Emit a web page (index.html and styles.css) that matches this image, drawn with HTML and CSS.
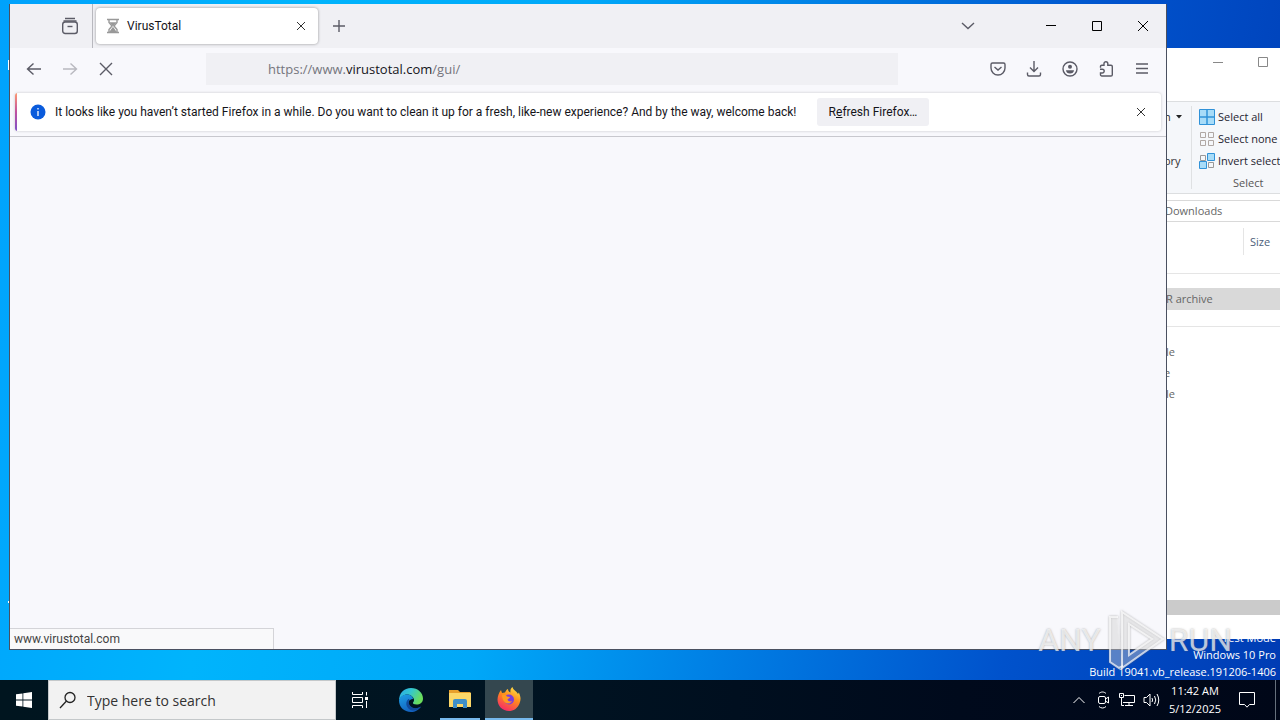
FILE: index.html
```html
<!DOCTYPE html>
<html lang="en">
<head>
<meta charset="utf-8">
<title>Desktop</title>
<link rel="stylesheet" href="styles.css">
</head>
<body>
<div class="screen">
  <main class="desktop">
    <div class="build"><span>Test Mode</span><span>Windows 10 Pro</span><span>Build 19041.vb_release.191206-1406</span></div>
    <div class="label-edge"></div>
    <div class="label-edge low"></div>

    <section class="explorer" aria-label="File Explorer">
      <div class="ex-title">
        <button aria-label="Minimize"><svg width="10" height="10" viewBox="0 0 10 10"><path d="M0 5.500h10"/></svg></button>
        <button aria-label="Maximize"><svg width="10" height="10" viewBox="0 0 10 10"><path d="M.5.5h9v9h-9z"/></svg></button>
      </div>
      <div class="ribbon">
        <div class="ribbon-open"><button>n <svg width="6" height="4" viewBox="0 0 6 4"><path d="M0 0h6L3 3.500z" fill="#222"/></svg></button><button>ory</button></div>
        <div class="ribbon-select">
          <button><svg width="16" height="16" viewBox="0 0 16 16"><path d="M.5.5h15v15H.5z" fill="#a8dcf8" stroke="#3092d8"/><path d="M8 0v16M0 8h16" stroke="#3092d8" stroke-width="1.500"/></svg>Select all</button>
          <button><svg width="16" height="16" viewBox="0 0 16 16" fill="none" stroke="#b0a8a4"><path d="M1.500 1.500h5v5h-5zM9.500 1.500h5v5h-5zM1.500 9.500h5v5h-5zM9.500 9.500h5v5h-5z"/></svg>Select none</button>
          <button><svg width="16" height="16" viewBox="0 0 16 16" fill="none"><path d="M1.500 2.500h5v5h-5zM9.500 9.500h5v5h-5z" stroke="#999"/><path d="M8.500.5h7v7h-7zM.5 8.500h7v7h-7z" fill="#a8dcf8" stroke="#3092d8"/></svg>Invert select</button>
          <span class="ribbon-name">Select</span>
        </div>
      </div>
      <div class="address">Downloads</div>
      <div class="columns"><span>Size</span></div>
      <ul class="files">
        <li class="picked">R archive</li>
        <li class="divider"></li>
        <li>le</li>
        <li class="short">e</li>
        <li>le</li>
      </ul>
      <div class="ex-scroll"></div>
    </section>

    <section class="firefox" aria-label="Firefox">
      <div class="tabs">
        <button class="view" aria-label="Firefox View"><svg width="18" height="18" viewBox="0 0 18 18"><path d="M4 1.500h10M2.500 4h13" stroke-width="1.300"/><rect x="1.700" y="5" width="14.600" height="11.500" rx="2.500"/><path d="M6.500 9.500h5"/></svg></button>
        <div class="tab">
          <svg width="14" height="16" viewBox="0 0 14 16" class="glass"><path d="M1 1.500h12M1 14.500h12M3 2v2.500L6 8l-3 3.500V14M11 2v2.500L8 8l3 3.500V14"/><path d="M5 5h4L7 7.500zM4.500 13.500L7 10l2.500 3.500z" fill="#999"/></svg>
          <span class="tab-name">VirusTotal</span>
          <button aria-label="Close tab"><svg width="10" height="10" viewBox="0 0 10 10"><path d="M1 1l8 8M9 1L1 9"/></svg></button>
        </div>
        <button class="plus" aria-label="New tab"><svg width="12" height="12" viewBox="0 0 12 12"><path d="M6 0v12M0 6h12"/></svg></button>
        <button class="list" aria-label="List all tabs"><svg width="14" height="8" viewBox="0 0 14 8"><path d="M1 1l6 5.500L13 1"/></svg></button>
        <button class="sys" aria-label="Minimize"><svg width="10" height="10" viewBox="0 0 10 10"><path d="M0 4.500h10"/></svg></button>
        <button class="sys" aria-label="Maximize"><svg width="10" height="10" viewBox="0 0 10 10"><path d="M.5.5h9v9h-9z"/></svg></button>
        <button class="sys" aria-label="Close"><svg width="10" height="10" viewBox="0 0 10 10"><path d="M0 0l10 10M10 0L0 10"/></svg></button>
      </div>
      <div class="nav">
        <button aria-label="Back"><svg width="16" height="16" viewBox="0 0 16 16"><path d="M15 8H1.500M7.500 2.500L1.500 8l6 5.500"/></svg></button>
        <button aria-label="Forward" disabled><svg width="16" height="16" viewBox="0 0 16 16"><path d="M1 8h13.500M8.500 2.500l6 5.500-6 5.500"/></svg></button>
        <button aria-label="Stop"><svg width="14" height="14" viewBox="0 0 14 14"><path d="M1 1l12 12M13 1L1 13"/></svg></button>
        <div class="url" role="textbox" contenteditable="true" spellcheck="false" aria-label="Address">https://www.<b>virustotal.com</b>/gui/</div>
        <div class="tools">
          <button aria-label="Pocket"><svg width="16" height="16" viewBox="0 0 16 16"><path d="M2.500 2h11a1.500 1.500 0 0 1 1.500 1.500V7A7 7 0 0 1 1 7V3.500A1.500 1.500 0 0 1 2.500 2zM4.500 6L8 9l3.500-3"/></svg></button>
          <button aria-label="Downloads"><svg width="16" height="16" viewBox="0 0 16 16"><path d="M8 0v10.500M4 6.500l4 4 4-4M1.500 11.500v2A1.500 1.500 0 0 0 3 15h10a1.500 1.500 0 0 0 1.500-1.500v-2"/></svg></button>
          <button aria-label="Account"><svg width="16" height="16" viewBox="0 0 16 16"><circle cx="8" cy="8" r="7"/><circle cx="8" cy="5.800" r="2" fill="#5b5b66" stroke="none"/><path d="M4 9.200h8c0 2-1.800 3.300-4 3.300s-4-1.300-4-3.300z" fill="#5b5b66" stroke="none"/></svg></button>
          <button aria-label="Extensions"><svg width="16" height="16" viewBox="0 0 16 16"><path d="M2.500 6.800V5.500A1.300 1.300 0 0 1 3.800 4.200H6V2.600a1.900 1.900 0 0 1 3.800 0v1.600H13a1.300 1.300 0 0 1 1.300 1.300v8.200A1.300 1.300 0 0 1 13 15H3.800a1.300 1.300 0 0 1-1.300-1.300V12h1.800a1.900 1.900 0 0 0 0-3.800H2"/></svg></button>
          <button aria-label="Menu"><svg width="14" height="14" viewBox="0 0 14 14"><path d="M1 2h12M1 6.500h12M1 11h12"/></svg></button>
        </div>
      </div>
      <div class="notice">
        <svg width="16" height="16" viewBox="0 0 16 16" class="info"><circle cx="8" cy="8" r="7.500" fill="#0a5bdc"/><path d="M8 7v5M8 4v1.500" stroke="#fff" stroke-width="1.300"/></svg>
        <p>It looks like you haven’t started Firefox in a while. Do you want to clean it up for a fresh, like-new experience? And by the way, welcome back!</p>
        <button class="refresh">R<u>e</u>fresh Firefox…</button>
        <button class="dismiss" aria-label="Dismiss"><svg width="10" height="10" viewBox="0 0 10 10"><path d="M1 1l8 8M9 1L1 9"/></svg></button>
      </div>
      <div class="page"><div class="status">www.virustotal.com</div></div>
    </section>

    <div class="mark"><span>ANY</span>
      <svg width="60" height="64" viewBox="0 0 60 64"><path d="M17 4l41 27-41 29zM24 16v31l23-16z"/><path d="M13 9H5v45l9 6 4-2"/></svg>
      <span>RUN</span></div>
  </main>

  <footer class="taskbar">
    <button class="start" aria-label="Start"><svg width="16" height="16" viewBox="0 0 16 16"><path fill="#fff" d="M0 2.300l6.500-.9v6.200H0zM7.300 1.200L16 0v7.600H7.300zM0 8.400h6.500v6.200L0 13.700zM7.300 8.400H16V16l-8.700-1.200z"/></svg></button>
    <label class="search"><svg width="18" height="18" viewBox="0 0 18 18"><circle cx="11" cy="6.500" r="5"/><path d="M7.500 10L1 17"/></svg><input type="text" placeholder="Type here to search" aria-label="Search"></label>
    <button class="app" aria-label="Task View"><svg width="16" height="16" viewBox="0 0 16 16" fill="none" stroke="#fff"><path d="M.5 0v2.500h10V0M.5 5.500h10v5H.5zM.5 16v-2.500h10V16M14.500 0v3.500M14.500 9v7"/><path d="M13 5h3v3h-3z" fill="#fff" stroke="none"/></svg></button>
    <button class="app edge" aria-label="Edge"><svg width="24" height="24" viewBox="0 0 24 24"><defs><linearGradient id="eg" x1="0" y1="0" x2="1" y2=".4"><stop offset="0" stop-color="#29a9e8"/><stop offset=".5" stop-color="#34c7cf"/><stop offset="1" stop-color="#6ade5b"/></linearGradient><linearGradient id="eb" x1="0" y1="0" x2=".5" y2="1"><stop offset="0" stop-color="#1da0e6"/><stop offset="1" stop-color="#1361be"/></linearGradient></defs><path d="M0 13C0 5 5 0 12 0s12 5 12 10.500c0 4-3 6-6.500 6-2.500 0-4-1-3.500-2 1-1 1-2 1-3C14 8 11 6.500 8 6.500S1 9 0 13z" fill="url(#eg)"/><path d="M0 12.500C1 8 5 6.500 8 6.500c4 0 6 2.500 6 4.500-5 .5-5 4-3.500 6.500 2 3.200 6.500 4.500 11.500 1C20 22 16 24 12 24 5 24 0 19 0 12.500z" fill="url(#eb)"/><path d="M9.500 11C5 15 8 21 13 22.500c4 .5 7-1.500 9-4-5 3-9.500 1.500-11.500-1.500-1.200-2-1-4.500 0-6z" fill="#114a9b"/></svg></button>
    <button class="app running" aria-label="File Explorer"><svg width="22" height="20" viewBox="0 0 22 20"><path d="M0 1h9l2 2h10.500v15H0z" fill="#e8a02c"/><path d="M0 4h22v14H0z" fill="#fcd768"/><path d="M4 19v-7a2 2 0 0 1 2-2h10a2 2 0 0 1 2 2v7h-4v-4H8v4z" fill="#3e8fc9"/></svg></button>
    <button class="app running active" aria-label="Firefox"><svg width="24" height="24" viewBox="0 0 24 24"><defs><linearGradient id="ff" x1=".8" y1="0" x2=".3" y2="1"><stop offset="0" stop-color="#ffe44a"/><stop offset=".45" stop-color="#ff8c1c"/><stop offset="1" stop-color="#f6286a"/></linearGradient></defs><path d="M4 3l1 3 3-.5C9 3 10.500 2 11 2c0 2 1 3 2.500 3.500C13 3 14 1 15.500 0c.5 3 4 4 5.500 7l.8-1.500C24 10 24 13 22.500 16.500 20.500 21.500 16.500 24 12 24 5.500 24 .5 19 .5 12.500.5 9 2 5.500 4 3z" fill="url(#ff)"/><circle cx="12" cy="12.500" r="5" fill="#7b3ddb"/><path d="M5 8c2-1 4 0 5 1.500 1 .3 2 .2 3 .5-.5 1.500-2 1.500-2.500 2.500.5 2 3 2.500 4.500 1.500-1 2.500-4.500 3.500-7 1.500C6 13.500 5 11 5 8z" fill="#ff9a20"/></svg></button>
    <div class="tray">
      <button aria-label="Hidden icons"><svg width="12" height="8" viewBox="0 0 12 8"><path d="M.5 7L6 1.500 11.500 7"/></svg></button>
      <button aria-label="Meet Now"><svg width="14" height="18" viewBox="0 0 14 18"><rect x="2.500" y="5.500" width="7" height="7" rx="1.500"/><path d="M9.500 8l3-2v6l-3-2M3 2.500c2-2 5-2 7 0M3 15.500c2 2 5 2 7 0"/></svg></button>
      <button aria-label="Network"><svg width="16" height="16" viewBox="0 0 16 16"><path d="M5.500 3.500h10v7H4M10 10.500v3M6 13.500h8M.5 1.500h4v4h-4zM2.500 5.500v8H5M2 3.500h1"/></svg></button>
      <button aria-label="Volume"><svg width="17" height="16" viewBox="0 0 17 16"><path d="M1 5.500h2.500L7 2v12l-3.500-3.500H1zM9 6q1.200 2 0 4M11.500 4q2.500 4 0 8M14 2q3.500 6 0 12"/></svg></button>
      <div class="clock"><time>11:42 AM</time><time>5/12/2025</time></div>
      <button class="action" aria-label="Notifications"><svg width="16" height="16" viewBox="0 0 16 16"><path d="M.5.5h15v12h-5L8 15.200 5.500 12.500h-5z"/></svg></button>
      <button class="peek" aria-label="Show desktop"></button>
    </div>
  </footer>
</div>
</body>
</html>
```
FILE: styles.css
```css
* { box-sizing: border-box; }
body { margin: 0; font: 11px/16px "Open Sans", "Noto Sans", sans-serif; color: #15141a; }
button { border: 0; padding: 0; background: none; font: inherit; color: inherit; display: flex; align-items: center; justify-content: center; }
ul, p { margin: 0; padding: 0; list-style: none; }
svg { display: block; flex: none; }
.screen { height: 100vh; display: flex; flex-direction: column; overflow: hidden; }
.desktop { flex: 1; position: relative; overflow: hidden; background: linear-gradient(100deg, #00a2fc 0%, #00b4fc 22%, #00a8f8 42%, #007ee4 60%, #0052cc 80%, #003cb4 100%); }

.build { position: absolute; right: 4px; bottom: 0; display: flex; flex-direction: column; align-items: flex-end; color: #fff; line-height: 17px; }
.label-edge { position: absolute; left: 8px; top: 60px; width: 1px; height: 10px; background: #fff; }
.low { top: 601px; height: 2px; }

.explorer { position: absolute; top: 48px; right: 0; bottom: 41px; width: 116px; background: #fff; display: flex; flex-direction: column; color: #333; white-space: nowrap; overflow: hidden; }
.ex-title { height: 53px; display: flex; justify-content: flex-end; align-items: flex-start; gap: 35px; padding: 9px 12px; }
.ex-title svg { fill: none; stroke: #888; }
.ribbon { height: 93px; background: #f5f7fa; border: 1px solid #dcdee0; border-width: 1px 0; display: flex; }
.ribbon-open { flex: none; width: 28px; margin: 4px 0; border-right: 1px solid #dfe1e3; display: flex; flex-direction: column; gap: 22px; align-items: flex-start; line-height: 22px; }
.ribbon-open button { gap: 5px; }
.ribbon-select { padding: 4px 0 0 7px; display: flex; flex-direction: column; align-items: flex-start; line-height: 22px; }
.ribbon-select button { gap: 3px; color: #1e2430; }
.ribbon-name { padding-left: 34px; color: #555; }
.address { margin-top: 6px; padding-left: 1px; height: 22px; line-height: 20px; border: 1px solid #d9d9d9; border-width: 1px 0; color: #666; }
.columns { padding: 6px 0 18px 79px; border-bottom: 1px solid #e5e5e5; color: #4c607a; }
.columns span { display: block; padding-left: 6px; border-left: 1px solid #e5e5e5; line-height: 27px; }
.files { padding-top: 14px; flex: 1; line-height: 21px; color: #666; }
.files li { padding-left: 2px; }
.files .short { padding-left: 0; }
.files .picked { background: #d9d9d9; line-height: 22px; }
.files .divider { height: 17px; margin-bottom: 14px; border-bottom: 1px solid #e5e5e5; }
.ex-scroll { height: 15px; margin-bottom: 24px; background: #cbcbcb; }

.firefox { position: absolute; left: 9px; top: 4px; right: 113px; bottom: 30px; display: flex; flex-direction: column; background: #f8f8fc; border: 1px solid #4a5060; border-top: 0; }
.firefox svg { fill: none; stroke: #5b5b66; stroke-width: 1.400; }
.tabs { height: 44px; background: #f0f0f4; display: flex; align-items: center; }
.view { width: 83px; height: 44px; padding-left: 37px; border-right: 1px solid #b8b8be; }
.tab { width: 222px; height: 36px; margin-left: 3px; padding: 0 12px 0 10px; display: flex; align-items: center; gap: 7px; background: #fff; border-radius: 4px; box-shadow: 0 0 3px rgba(0, 0, 0, .4); }
.tab-name { flex: 1; font: 12px/16px Roboto, sans-serif; }
.firefox .glass { stroke: #999; }
.tab button svg, .dismiss svg { stroke-width: 1; stroke: #333; }
.plus { width: 42px; height: 36px; }
.list { margin-left: auto; margin-right: 53px; }
.sys { width: 46px; height: 44px; }
.firefox .sys svg { stroke: #000; stroke-width: 1; }
.nav { height: 41px; display: flex; align-items: center; padding: 0 6px; }
.nav > button { width: 36px; height: 32px; }
.nav button:disabled svg { opacity: .4; }
.url { margin-left: 82px; flex: 0 1 692px; height: 32px; padding-left: 62px; background: #f0f0f4; font-size: 13px; line-height: 32px; color: #75757d; white-space: nowrap; overflow: hidden; }
.url b { font-weight: 400; color: #15141a; }
.tools { margin-left: auto; display: flex; }
.tools button { width: 36px; height: 32px; }
.notice { height: 38px; margin: 4px 5px 5px; padding: 0 15px; display: flex; align-items: center; background: linear-gradient(#ff9a70, #c050a0 50%, #7d50c8) left / 2px 100% no-repeat #fff; border-radius: 3px; box-shadow: 0 0 3px rgba(0, 0, 0, .2); white-space: nowrap; font: 12px/16px Roboto, sans-serif; }
.firefox .info { stroke: none; }
.notice p { flex: 0 1 743px; margin-left: 9px; }
.refresh { margin-left: 19px; width: 112px; height: 28px; background: #f0f0f4; border-radius: 3px; }
.dismiss { margin-left: auto; }
.page { flex: 1; border-top: 1px solid #c8c8ce; display: flex; align-items: flex-end; }
.status { width: 264px; height: 21px; padding-left: 4px; font: 12px/21px Roboto, sans-serif; border: 1px solid #d4d4d8; border-width: 1px 1px 0 0; background: #f9f9fa; color: #444; }

.mark { position: absolute; right: 48px; bottom: 8px; display: flex; align-items: center; gap: 4px; color: rgba(255, 255, 255, .7); font: 32px/60px Roboto, sans-serif; text-shadow: 0 0 2px rgba(90, 90, 90, .5); }
.mark svg { fill: rgba(255, 255, 255, .3); fill-rule: evenodd; stroke: rgba(255, 255, 255, .7); stroke-width: 2; filter: drop-shadow(0 0 1px rgba(90, 90, 90, .6)); }

.taskbar { height: 40px; display: flex; background: linear-gradient(90deg, #00151f, #001422 40%, #000a1c 75%, #000718); color: #fff; }
.start { width: 48px; }
.search { width: 288px; display: flex; align-items: center; gap: 10px; padding-left: 10px; background: #f2f2f2; border: 1px solid #c4c8ca; }
.search svg { fill: none; stroke: #222; stroke-width: 1.300; }
.search input { flex: 1; min-width: 0; border: 0; padding: 2px 0 0; background: none; outline: 0; font: 14px/20px "Open Sans", "Noto Sans", sans-serif; }
.search input::placeholder { color: #333; opacity: 1; }
.app { width: 48px; }
.edge { margin-left: 3px; }
.running { width: 40px; margin-left: 5px; border-bottom: 2px solid #76b9ed; }
.active { width: 48px; background: #34474f; }
.tray { margin-left: auto; display: flex; }
.tray button { width: 24px; }
.tray svg { fill: none; stroke: #fff; }
.clock { width: 56px; margin-left: 4px; display: flex; flex-direction: column; align-items: center; justify-content: center; line-height: 18px; }
.tray .action { width: 52px; padding-right: 4px; }
.tray .peek { width: 5px; border-left: 1px solid #66707c; }
```
